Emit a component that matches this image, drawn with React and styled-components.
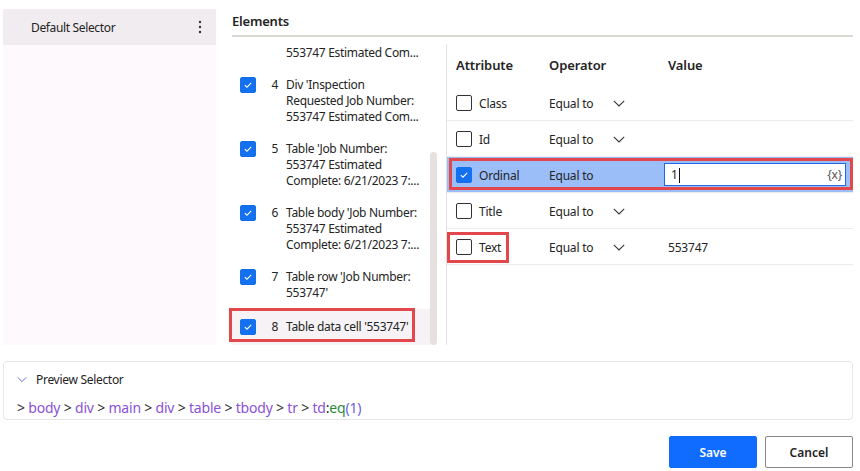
import React from 'react';
import styled, { createGlobalStyle } from 'styled-components';

const Global = createGlobalStyle`
  html, body { margin: 0; padding: 0; background: #ffffff; }
  body { font-family: "Segoe UI", "Noto Sans", "Open Sans", sans-serif; color: #242424; }
  * { box-sizing: border-box; }
`;

const Page = styled.div`
  width: 860px;
  height: 471px;
  overflow: hidden;
  padding: 9px 7px 0 3px;
  display: flex;
  flex-direction: column;
`;

const Top = styled.div`
  display: flex;
  height: 336px;
  gap: 16px;
`;

const Sidebar = styled.aside`
  width: 213px;
  flex: none;
  background: #fdf9fc;
`;

const SidebarItem = styled.div`
  height: 36px;
  background: #f0ecef;
  display: flex;
  align-items: center;
  justify-content: space-between;
  padding: 0 14px 0 28px;
  font-size: 12px;
  letter-spacing: -0.35px;
`;

const Elements = styled.section`
  flex: 1;
  min-width: 0;
  display: flex;
  flex-direction: column;
`;

const Heading = styled.h2`
  margin: 0;
  height: 28px;
  line-height: 24px;
  font-size: 13px;
  font-weight: 600;
  letter-spacing: -0.2px;
  border-bottom: 2px solid #dcd8d4;
`;

const Body = styled.div`
  flex: 1;
  display: flex;
  min-height: 0;
`;

const List = styled.div`
  width: 205px;
  flex: none;
  margin-top: 6px;
  display: flex;
`;

const ListViewport = styled.div`
  flex: 1;
  clip-path: inset(0px -8px 0px -8px);
`;

const ScrollTrack = styled.div`
  width: 7px;
  display: flex;
  flex-direction: column;
`;

const ScrollThumb = styled.div`
  margin-top: 109px;
  flex: 1;
  border-radius: 4px;
  background: #e6e0de;
`;

const Item = styled.div`
  position: relative;
  display: grid;
  grid-template-columns: 16px 30px 1fr;
  padding: ${p => (p.$selected ? '10px' : p.$partial ? '2px' : '8px')} 0 ${p => (p.$selected ? '10px' : '8px')} 8px;
  background: ${p => (p.$selected ? '#f6f2f5' : 'transparent')};
  font-size: 12px;
  line-height: 16px;
  letter-spacing: -0.3px;
`;

const ItemNum = styled.span`
  text-align: right;
  padding-right: 8px;
`;

const ItemLines = styled.div`
  grid-column: 3;
  display: flex;
  flex-direction: column;
  white-space: nowrap;
`;

const Box = styled.span`
  width: 16px;
  height: 16px;
  flex: none;
  border-radius: 2px;
  border: 1px solid ${p => (p.$checked ? '#1570ef' : '#333333')};
  background: ${p => (p.$checked ? '#1570ef' : '#ffffff')};
  display: inline-flex;
  align-items: center;
  justify-content: center;
`;

const Annotation = styled.span`
  position: absolute;
  border: 3px solid #e2474b;
  pointer-events: none;
  top: ${p => p.$top}px;
  left: ${p => p.$left}px;
  width: ${p => p.$width};
  height: ${p => p.$height}px;
`;

const Table = styled.div`
  flex: 1;
  margin: 7px 0 0 9px;
  border-left: 1px solid #e3e0de;
  display: flex;
  flex-direction: column;
`;

const Row = styled.div`
  position: relative;
  display: grid;
  grid-template-columns: 94px 119px 1fr;
  height: ${p => (p.$header ? '41px' : '36px')};
  padding-top: 1px;
  border-bottom: ${p => (p.$header ? 'none' : '1px solid #eeecea')};
  background: ${p => (p.$selected ? '#9bbdf8' : 'transparent')};
  font-size: ${p => (p.$header ? '13px' : '12px')};
  font-weight: ${p => (p.$header ? 600 : 400)};
  letter-spacing: ${p => (p.$header ? '-0.1px' : '-0.2px')};
`;

const Cell = styled.div`
  display: flex;
  align-items: center;
  gap: 7px;
  padding-left: ${p => (p.$first ? '9px' : '8px')};
`;

const OpLabel = styled.span`
  width: 57px;
`;

const InputCell = styled.div`
  display: flex;
  padding: 5px 7px 6px 4px;
`;

const ValueInput = styled.div`
  flex: 1;
  background: #ffffff;
  border: 1px solid #2266e3;
  display: flex;
  align-items: center;
  justify-content: space-between;
  padding: 0 3px 0 6px;
  font-size: 12px;
`;

const Caret = styled.span`
  display: inline-block;
  width: 1px;
  height: 15px;
  background: #111;
  margin-left: 1px;
  vertical-align: middle;
`;

const VarToken = styled.span`
  color: #555;
  font-size: 12px;
`;

const Preview = styled.section`
  margin-top: 16px;
  height: 59px;
  border: 1px solid #e6e6e6;
  border-radius: 4px;
  padding: 8px 13px 0 13px;
`;

const PreviewTitle = styled.div`
  display: flex;
  align-items: center;
  gap: 9px;
  height: 18px;
  font-size: 12px;
  letter-spacing: -0.3px;
`;

const Path = styled.div`
  margin-top: 11px;
  line-height: 18px;
  font-size: 14px;
  letter-spacing: -0.2px;
  white-space: nowrap;
`;

const Tok = styled.span`
  color: ${p => ({ sep: '#2b2b2b', tag: '#8a52d8', fn: '#1f8a3a', arg: '#6f5be0' }[p.$kind])};
`;

const Actions = styled.div`
  margin-top: 16px;
  display: flex;
  justify-content: flex-end;
  gap: 8px;
`;

const Button = styled.button`
  width: 88px;
  height: 32px;
  border-radius: 2px;
  font-family: inherit;
  font-size: 12px;
  font-weight: 600;
  cursor: pointer;
  border: 1px solid ${p => (p.$primary ? '#0f6cff' : '#8a8886')};
  background: ${p => (p.$primary ? '#0f6cff' : '#ffffff')};
  color: ${p => (p.$primary ? '#ffffff' : '#242424')};
`;

const Check = () => (
  <svg width="10" height="10" viewBox="0 0 10 10">
    <polyline points="1.8,5.2 4,7.2 8.2,2.8" fill="none" stroke="#fff" strokeWidth="1.1" />
  </svg>
);

const Checkbox = ({ checked }) => <Box $checked={checked}>{checked && <Check />}</Box>;

const Chevron = ({ color = '#333', w = 12 }) => (
  <svg width={w} height="7" viewBox="0 0 12 7">
    <polyline points="0.8,0.8 6,6 11.2,0.8" fill="none" stroke={color} strokeWidth="1.1" />
  </svg>
);

const Kebab = () => (
  <svg width="4" height="14" viewBox="0 0 4 14">
    <circle cx="2" cy="2" r="1.2" fill="#333" />
    <circle cx="2" cy="7" r="1.2" fill="#333" />
    <circle cx="2" cy="12" r="1.2" fill="#333" />
  </svg>
);

const items = [
  { n: 3, lines: ['553747 Estimated Com...'], partial: true },
  { n: 4, lines: ["Div 'Inspection", 'Requested Job Number:', '553747 Estimated Com...'] },
  { n: 5, lines: ["Table 'Job Number:", '553747 Estimated', 'Complete: 6/21/2023 7:...'] },
  { n: 6, lines: ["Table body 'Job Number:", '553747 Estimated', 'Complete: 6/21/2023 7:...'] },
  { n: 7, lines: ["Table row 'Job Number:", "553747'"] },
  { n: 8, lines: ["Table data cell '553747'"], selected: true },
];

const attrs = [
  { name: 'Class' },
  { name: 'Id' },
  { name: 'Ordinal', checked: true, selected: true, value: '1' },
  { name: 'Title' },
  { name: 'Text', value: '553747', marked: true },
];

const path = [
  ['sep', '> '], ['tag', 'body'], ['sep', ' > '], ['tag', 'div'], ['sep', ' > '], ['tag', 'main'],
  ['sep', ' > '], ['tag', 'div'], ['sep', ' > '], ['tag', 'table'], ['sep', ' > '], ['tag', 'tbody'],
  ['sep', ' > '], ['tag', 'tr'], ['sep', ' > '], ['tag', 'td'], ['sep', ':'], ['fn', 'eq'], ['arg', '(1)'],
];

export default function App() {
  return (
    <Page>
      <Global />
      <Top>
        <Sidebar>
          <SidebarItem>
            <span>Default Selector</span>
            <Kebab />
          </SidebarItem>
        </Sidebar>
        <Elements>
          <Heading>Elements</Heading>
          <Body>
            <List>
              <ListViewport>
                {items.map(it => (
                  <Item key={it.n} $selected={it.selected} $partial={it.partial}>
                    {!it.partial && <Checkbox checked />}
                    {!it.partial && <ItemNum>{it.n}</ItemNum>}
                    <ItemLines>
                      {it.lines.map(l => <span key={l}>{l}</span>)}
                    </ItemLines>
                    {it.selected && <Annotation $top={-1} $left={-3} $width="186px" $height={34} />}
                  </Item>
                ))}
              </ListViewport>
              <ScrollTrack>
                <ScrollThumb />
              </ScrollTrack>
            </List>
            <Table>
              <Row $header>
                <Cell $first>Attribute</Cell>
                <Cell>Operator</Cell>
                <Cell>Value</Cell>
              </Row>
              {attrs.map(a => (
                <Row key={a.name} $selected={a.selected}>
                  <Cell $first>
                    <Checkbox checked={a.checked} />
                    <span>{a.name}</span>
                  </Cell>
                  <Cell>
                    <OpLabel>Equal to</OpLabel>
                    {!a.selected && <Chevron />}
                  </Cell>
                  {a.selected ? (
                    <InputCell>
                      <ValueInput>
                        <span>{a.value}<Caret /></span>
                        <VarToken>{'{x}'}</VarToken>
                      </ValueInput>
                    </InputCell>
                  ) : (
                    <Cell>{a.value}</Cell>
                  )}
                  {a.selected && <Annotation $top={1} $left={2} $width="calc(100% - 2px)" $height={32} />}
                  {a.marked && <Annotation $top={3} $left={0} $width="62px" $height={31} />}
                </Row>
              ))}
            </Table>
          </Body>
        </Elements>
      </Top>
      <Preview>
        <PreviewTitle>
          <Chevron color="#5a67d8" w={10} />
          <span>Preview Selector</span>
        </PreviewTitle>
        <Path>
          {path.map(([k, t], i) => <Tok key={i} $kind={k}>{t}</Tok>)}
        </Path>
      </Preview>
      <Actions>
        <Button $primary>Save</Button>
        <Button>Cancel</Button>
      </Actions>
    </Page>
  );
}
